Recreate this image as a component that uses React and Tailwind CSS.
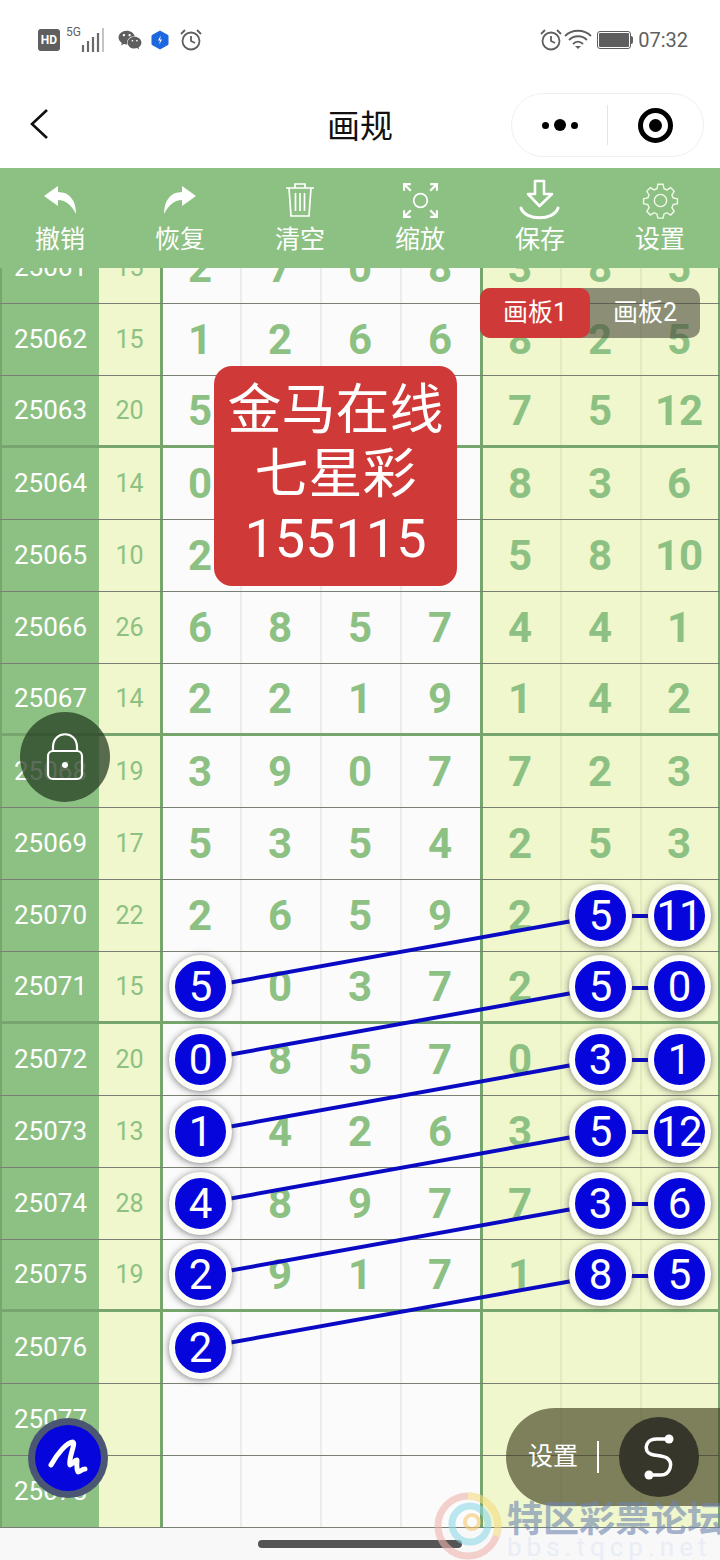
import React from 'react';
import { FaWeixin } from 'react-icons/fa';

const rows = [
  ['25061', '15', [2, 7, 0, 8, 3, 8, 5]],
  ['25062', '15', [1, 2, 6, 6, 8, 2, 5]],
  ['25063', '20', [5, 6, 4, 5, 7, 5, 12]],
  ['25064', '14', [0, 5, 2, 7, 8, 3, 6]],
  ['25065', '10', [2, 1, 4, 3, 5, 8, 10]],
  ['25066', '26', [6, 8, 5, 7, 4, 4, 1]],
  ['25067', '14', [2, 2, 1, 9, 1, 4, 2]],
  ['25068', '19', [3, 9, 0, 7, 7, 2, 3]],
  ['25069', '17', [5, 3, 5, 4, 2, 5, 3]],
  ['25070', '22', [2, 6, 5, 9, 2, 5, 11]],
  ['25071', '15', [5, 0, 3, 7, 2, 5, 0]],
  ['25072', '20', [0, 8, 5, 7, 0, 3, 1]],
  ['25073', '13', [1, 4, 2, 6, 3, 5, 12]],
  ['25074', '28', [4, 8, 9, 7, 7, 3, 6]],
  ['25075', '19', [2, 9, 1, 7, 1, 8, 5]],
  ['25076', '', [2]],
  ['25077', '', []],
  ['25078', '', []],
];

// row index -> columns drawn as a ball
const balls = {
  9: [5, 6],
  10: [0, 5, 6],
  11: [0, 5, 6],
  12: [0, 5, 6],
  13: [0, 5, 6],
  14: [0, 5, 6],
  15: [0],
};

const thickRows = [2, 6, 10, 14];

const Ball = ({ value }) => (
  <div className="relative z-10 flex h-[63px] w-[63px] items-center justify-center rounded-full border-[6px] border-[#fdfdf8] bg-[#0505dc] text-[42px] font-normal tracking-[-1px] text-white shadow-[0_1px_7px_rgba(50,50,50,0.65)]">
    {value}
  </div>
);

const Row = ({ row, index }) => {
  const [issue, sum, nums] = row;
  const thick = thickRows.includes(index);
  const border = thick ? 'border-b-[3px] border-[#76a66e]' : 'border-b border-[#7a7f76]';
  return (
    <div className={`grid h-[72px] grid-cols-[99px_61px_repeat(7,80px)] ${border}`}>
      <div className="flex items-center justify-center border-l-2 border-[#76a66e] bg-[#8dc183] text-[26px] text-white">{issue}</div>
      <div className="flex items-center justify-center bg-[#f0f7cc] text-[25px] text-[#8dc183]">{sum}</div>
      {[0, 1, 2, 3, 4, 5, 6].map((col) => {
        const isBall = balls[index] && balls[index].includes(col);
        const divider = col === 0 || col === 4 ? 'border-l-[3px] border-[#76a66e] pr-[3px]' : 'border-l-2 border-[#ececec] pr-[2px]';
        const bg = col < 4 ? 'bg-[#fbfbfb]' : 'bg-[#f0f7cc]';
        const edge = col === 6 ? 'border-r-2 border-r-[#76a66e] pr-0' : '';
        const lineCol = col > 4 ? 'border-l-[#e3eabd]' : '';
        return (
          <div key={col} className={`flex items-center justify-center ${divider} ${lineCol} ${edge} ${bg} text-[42px] font-bold text-[#8dc183]`}>
            {isBall ? <Ball value={nums[col]} /> : nums[col]}
          </div>
        );
      })}
    </div>
  );
};

const Undo = ({ flip }) => (
  <svg width="34" height="30" viewBox="0 0 34 30" className={flip ? '-scale-x-100' : ''}>
    <path d="M15 1 L1 11 L15 21 L15 15 C23 15 29 21 33 29 C33 16 27 7 15 7 Z" fill="#fff" />
  </svg>
);

const Trash = () => (
  <svg width="30" height="36" viewBox="0 0 30 36" fill="none" stroke="#fff" strokeWidth="1.7">
    <path d="M1 6 H29 M10 6 V2 H20 V6 M4 6 L6 34 H24 L26 6 M10.5 11 V29 M15 11 V29 M19.5 11 V29" />
  </svg>
);

const Scan = () => (
  <svg width="35" height="35" viewBox="0 0 36 36" fill="none" stroke="#fff" strokeWidth="2.4">
    <circle cx="18" cy="18" r="7" strokeWidth="1.8" />
    <path d="M1 8 V1 H8 M1 1 L8 8 M35 8 V1 H28 M35 1 L28 8 M1 28 V35 H8 M1 35 L8 28 M35 28 V35 H28 M35 35 L28 28" />
  </svg>
);

const Save = () => (
  <svg width="42" height="42" viewBox="0 0 42 42" fill="none" stroke="#fff" strokeWidth="2.6">
    <path d="M16 2 H25 V15 H33 L20.5 27 L9 15 H16 Z" strokeLinejoin="round" />
    <path d="M2 29 C6 42 35 42 39 29" strokeWidth="3" strokeLinecap="round" />
  </svg>
);

const Gear = () => (
  <svg width="37" height="37" viewBox="0 0 24 24" fill="none" stroke="#f2f8ea" strokeWidth="0.9">
    <circle cx="12" cy="12" r="4" />
    <path d="M10.3 1.5 h3.4 l.6 2.8 1.9.8 2.4-1.5 2.3 2.4-1.5 2.4.8 1.9 2.8.6 v3.2 l-2.8.6-.8 1.9 1.5 2.4-2.3 2.4-2.4-1.5-1.9.8-.6 2.7 h-3.4 l-.6-2.7-1.9-.8-2.4 1.5-2.3-2.4 1.5-2.4-.8-1.9-2.8-.6 v-3.2 l2.8-.6.8-1.9-1.5-2.4 2.3-2.4 2.4 1.5 1.9-.8 z" />
  </svg>
);

const Alarm = () => (
  <svg width="24" height="24" viewBox="0 0 24 24" fill="none" stroke="#5f5f5f" strokeWidth="1.8">
    <circle cx="12" cy="13" r="8.5" />
    <path d="M12 8 V13 L16 15 M2 6 L6 2 M22 6 L18 2" />
  </svg>
);

const tools = [
  ['撤销', <Undo />],
  ['恢复', <Undo flip />],
  ['清空', <Trash />],
  ['缩放', <Scan />],
  ['保存', <Save />],
  ['设置', <Gear />],
];

const App = () => (
  <div className="relative flex h-[1560px] w-[720px] flex-col overflow-hidden bg-white font-[Roboto,'Noto_Sans_CJK_SC',sans-serif]">
    {/* status bar */}
    <div className="flex h-[84px] items-center justify-between pb-[4px] pl-[38px] pr-[32px] text-[#5f5f5f]">
      <div className="flex items-center">
        <div className="flex h-[22px] w-[22px] items-center justify-center rounded-[3px] bg-[#5f5f5f] text-[12px] font-bold text-white">HD</div>
        <div className="relative ml-[6px] h-[26px] w-[38px]">
          <span className="absolute left-0 top-[-4px] text-[12px]">5G</span>
          <svg width="38" height="26" viewBox="0 0 38 26" className="absolute left-0 top-0">
            <path d="M17 18 V25 M22 14 V25 M27 10 V25 M32 6 V25" stroke="#6a6a6a" strokeWidth="2.2" />
            <path d="M37 1 V25" stroke="#c4c4c4" strokeWidth="2" />
          </svg>
        </div>
        <FaWeixin className="ml-[14px] text-[24px] text-[#5f5f5f]" />
        <svg width="18" height="20" viewBox="0 0 18 20" className="ml-[9px]">
          <path d="M9 1 L17 5.5 V14.5 L9 19 L1 14.5 V5.5 Z" fill="#1d67e0" stroke="#1d67e0" strokeLinejoin="round" />
          <path d="M9.8 5.5 L7 10.5 H9 L8.2 14.5 L11 9.5 H9 Z" fill="#fff" />
        </svg>
        <div className="ml-[10px]"><Alarm /></div>
      </div>
      <div className="flex items-center">
        <Alarm />
        <svg width="28" height="22" viewBox="0 0 28 22" fill="none" stroke="#5f5f5f" strokeWidth="1.8" className="ml-px">
          <path d="M1 7 C8 0 20 0 27 7 M5 11 C10 6 18 6 23 11 M9 15 C12 12 16 12 19 15" />
          <path d="M14 20 L11 17 H17 Z" fill="#5f5f5f" stroke="none" />
        </svg>
        <div className="ml-[5px] flex h-[18px] w-[34px] items-center rounded-[3px] border border-[#5f5f5f] p-px">
          <div className="h-full w-full rounded-[1px] bg-[#5f5f5f]" />
        </div>
        <div className="h-[8px] w-[2px] rounded-r-sm bg-[#5f5f5f]" />
        <span className="ml-[5px] text-[20px] leading-none">07:32</span>
      </div>
    </div>

    {/* nav bar */}
    <div className="relative flex h-[84px] items-center justify-center">
      <svg width="20" height="30" viewBox="0 0 20 30" fill="none" stroke="#111" strokeWidth="2.6" className="absolute left-[29px] top-[25px]">
        <path d="M18 1 L3 15 L18 29" />
      </svg>
      <span className="text-[33px] leading-none text-[#111]">画规</span>
      <div className="absolute left-[511px] top-[9px] flex h-[64px] w-[193px] items-center rounded-full border border-[#f0f0f0]">
        <div className="flex w-[95px] items-center justify-center gap-[5px]">
          <span className="h-[7px] w-[7px] rounded-full bg-black" />
          <span className="h-[12px] w-[12px] rounded-full bg-black" />
          <span className="h-[7px] w-[7px] rounded-full bg-black" />
        </div>
        <div className="h-[40px] w-px bg-[#e4e4e4]" />
        <div className="flex flex-1 items-center justify-center">
          <div className="flex h-[35px] w-[35px] items-center justify-center rounded-full border-[5px] border-black">
            <span className="h-[13px] w-[13px] rounded-full bg-black" />
          </div>
        </div>
      </div>
    </div>

    {/* toolbar */}
    <div className="z-20 grid h-[100px] grid-cols-6 bg-[#8dc183]">
      {tools.map(([label, icon]) => (
        <div key={label} className="flex flex-col items-center">
          <div className="flex h-[64px] items-center justify-center">{icon}</div>
          <span className="mt-[-8px] text-[25px] leading-[32px] text-white">{label}</span>
        </div>
      ))}
    </div>

    {/* table */}
    <div className="h-[1259px] overflow-hidden">
      <div className="relative mt-[-36px]">
        {rows.map((row, i) => (
          <Row key={row[0]} row={row} index={i} />
        ))}
        <svg width="720" height="1296" className="absolute left-0 top-0" fill="none" stroke="#0a0ac4" strokeWidth="4">
          <path d="M200 756 L600 684 M200 828 L600 756 M200 900 L600 828 M200 972 L600 900 M200 1044 L600 972 M200 1116 L600 1044" />
          <path d="M600 684 H680 M600 756 H680 M600 828 H680 M600 900 H680 M600 972 H680 M600 1044 H680" />
        </svg>
      </div>
    </div>

    {/* bottom bar */}
    <div className="flex h-[33px] items-start justify-center border-t border-[#7a7f76] bg-[#f8f8f8] pt-[12px]">
      <div className="h-[8px] w-[204px] rounded-full bg-[#555]" />
    </div>

    {/* board tabs */}
    <div className="absolute left-[480px] top-[288px] z-20 flex h-[50px] w-[220px] rounded-[10px] bg-[#4a4a3a]/60 text-[25px] text-white">
      <div className="flex w-[110px] items-center justify-center rounded-[10px] bg-[#cf3a38]">画板1</div>
      <div className="flex w-[110px] items-center justify-center">画板2</div>
    </div>

    {/* red notice */}
    <div className="absolute left-[214px] top-[366px] z-20 flex h-[220px] w-[243px] flex-col items-center justify-center rounded-[18px] bg-[#cf3a38] pb-[2px] text-[54px] leading-[64px] text-white">
      <div>金马在线</div>
      <div>七星彩</div>
      <div>155115</div>
    </div>

    {/* lock */}
    <div className="absolute left-[20px] top-[712px] z-20 flex h-[90px] w-[90px] items-center justify-center rounded-full bg-[#263c22]/75">
      <svg width="38" height="48" viewBox="0 0 38 48" fill="none" stroke="#fff" strokeWidth="2.2">
        <rect x="2" y="18" width="34" height="28" rx="5" />
        <path d="M7 18 V14 C7 -3 31 -3 31 14 V18" />
        <circle cx="19" cy="32" r="3" fill="#fff" stroke="none" />
      </svg>
    </div>

    {/* pen button */}
    <div className="absolute left-[28px] top-[1418px] z-20 flex h-[80px] w-[80px] items-center justify-center rounded-full border-[7px] border-[#5d6a5a]/80 bg-[#0505dc]">
      <svg width="40" height="38" viewBox="0 0 40 38" fill="none" stroke="#fff" strokeWidth="5" strokeLinecap="round" strokeLinejoin="round">
        <path d="M3 26 C9 15 19 3 25 3 C28 4 20 20 22 26 C25 25 27 20 29 21 C29 25 28 29 30 33 C32 33 34 30 37 30" />
      </svg>
    </div>

    {/* settings pill */}
    <div className="absolute left-[506px] top-[1408px] z-20 flex h-[98px] w-[214px] items-center rounded-l-[49px] bg-[#40401f]/65 pl-[22px]">
      <span className="text-[25px] text-white">设置</span>
      <div className="ml-[19px] h-[32px] w-[2px] bg-white" />
      <div className="ml-[20px] flex h-[80px] w-[80px] items-center justify-center rounded-full bg-[#36362a]">
        <svg width="32" height="46" viewBox="0 0 32 46" fill="none" stroke="#fff" strokeWidth="3.4">
          <path d="M26 5 H14 C4 5 2 12 4 17 C7 23 18 20 24 24 C31 29 27 41 18 41 H6" strokeLinecap="round" />
          <circle cx="26" cy="5" r="4.5" fill="#fff" stroke="none" />
          <circle cx="6" cy="41" r="4.5" fill="#fff" stroke="none" />
        </svg>
      </div>
    </div>

    {/* watermark */}
    <div className="absolute left-[434px] top-[1492px] z-30 flex opacity-60">
      <svg width="68" height="68" viewBox="0 0 68 68" fill="none">
        <circle cx="34" cy="34" r="30" stroke="#efb4ae" strokeWidth="7" />
        <path d="M34 4 A30 30 0 0 1 62 44" stroke="#f5dd80" strokeWidth="7" />
        <circle cx="36" cy="32" r="18" stroke="#8fd9e8" strokeWidth="7" />
        <circle cx="38" cy="30" r="7" stroke="#f3c870" strokeWidth="4" />
      </svg>
      <div className="ml-[5px] flex flex-col">
        <span className="mt-[10px] whitespace-nowrap text-[36px] font-bold leading-[36px] text-[#6f85b0]">特区彩票论坛</span>
        <span className="mt-[-3px] whitespace-nowrap text-[26px] leading-[24px] tracking-[5px] text-[#dfe6f5]">bbs.tqcp.net</span>
      </div>
    </div>
  </div>
);

export default App;
